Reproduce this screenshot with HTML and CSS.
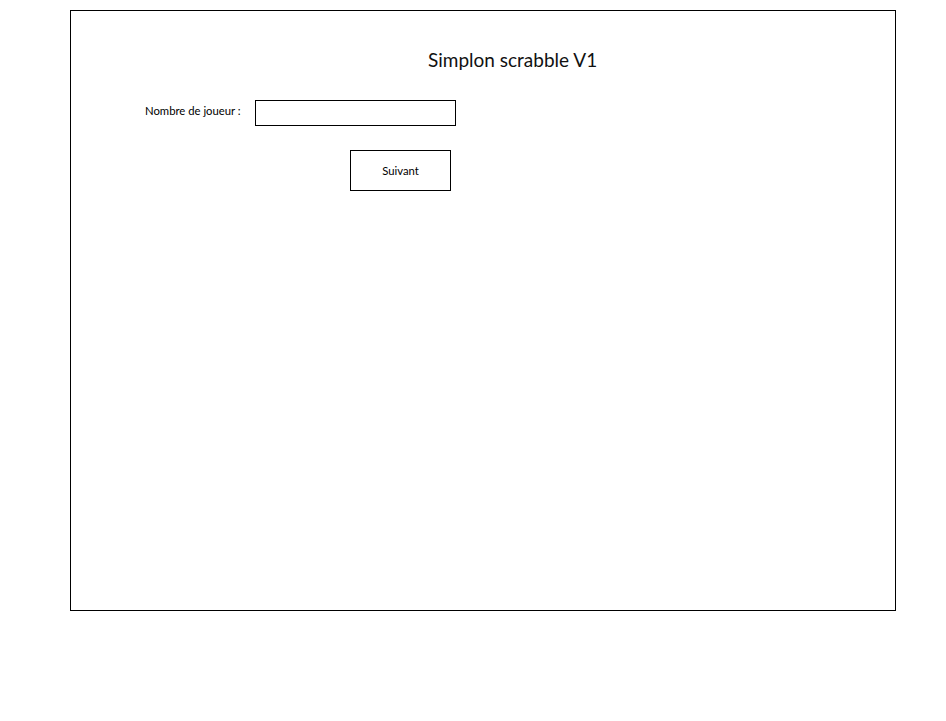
FILE: index.html
```html
<!DOCTYPE html>
<html>
<head>
<meta charset="utf-8">
<link rel="stylesheet" href="styles.css">
</head>
<body>
<div class="frame">
  <h1 class="title">Simplon scrabble V1</h1>
  <div class="row">
    <label class="label" for="nb">Nombre de joueur :</label>
    <input class="input" id="nb" type="text">
  </div>
  <div class="actions">
    <button class="btn" type="button">Suivant</button>
  </div>
</div>
</body>
</html>
```

FILE: styles.css
```css
html, body {
  margin: 0;
  padding: 0;
  background: #fff;
}
body {
  font-family: Lato, "Open Sans", sans-serif;
  color: #000;
}
.frame {
  box-sizing: border-box;
  margin: 10px 0 0 70px;
  width: 826px;
  height: 601px;
  border: 1px solid #000;
  display: flex;
  flex-direction: column;
}
.title {
  margin: 37px 0 0 357px;
  font-size: 19px;
  font-weight: 400;
  line-height: 24px;
  color: #111;
}
.row {
  display: flex;
  align-items: center;
  margin-top: 28px;
  margin-left: 74px;
}
.label {
  font-size: 11.3px;
  width: 110px;
  line-height: 14px;
  margin-top: -4px;
}
.input {
  box-sizing: border-box;
  width: 201px;
  height: 26px;
  border: 1px solid #000;
  border-radius: 0;
  padding: 0 4px;
  margin: 0;
  outline: none;
  font-family: inherit;
}
.actions {
  display: flex;
  margin-top: 24px;
  margin-left: 279px;
}
.btn {
  box-sizing: border-box;
  width: 101px;
  height: 41px;
  border: 1px solid #000;
  background: #fff;
  border-radius: 0;
  font-family: inherit;
  font-size: 11.3px;
  color: #000;
  padding: 0;
  margin: 0;
}
```
